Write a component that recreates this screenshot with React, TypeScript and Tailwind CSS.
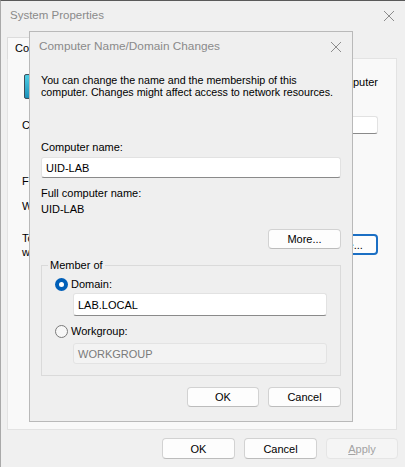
import React from "react";

const font = { fontFamily: '"Liberation Sans", Arial, sans-serif' };

function WinButton({ children, className = "", disabled = false, primary = false }: { children: React.ReactNode; className?: string; disabled?: boolean; primary?: boolean }) {
  return (
    <div
      className={`flex items-center justify-center rounded-[4px] border text-[11px] leading-[14px] ${
        disabled
          ? "bg-[#f5f5f5] border-[#e5e5e5] text-[#a3a3a3]"
          : primary
          ? "bg-[#fdfdfd] border-[#1b6fc4] text-black"
          : "bg-[#fdfdfd] border-[#d2d2d2] border-b-[#bcbcbc] text-black"
      } ${className}`}
    >
      {children}
    </div>
  );
}

function TextBox({ value, className = "", disabled = false }: { value: string; className?: string; disabled?: boolean }) {
  return (
    <div
      className={`flex items-center px-[4px] rounded-[3px] border text-[11px] ${
        disabled
          ? "bg-[#f3f3f3] border-[#e3e3e3] text-[#7a7a7a]"
          : "bg-white border-[#e2e2e2] border-b-[#8a8a8a] text-black"
      } ${className}`}
    >
      {value}
    </div>
  );
}

function Radio({ checked }: { checked: boolean }) {
  return checked ? (
    <span className="w-[13px] h-[13px] rounded-full bg-[#005fb8] flex items-center justify-center shrink-0">
      <span className="w-[5px] h-[5px] rounded-full bg-white" />
    </span>
  ) : (
    <span className="w-[13px] h-[13px] rounded-full border border-[#7a7a7a] bg-[#f7f7f7] shrink-0" />
  );
}

function CloseX() {
  return (
    <svg width="12" height="12" viewBox="0 0 12 12">
      <path d="M1 1 L11 11 M11 1 L1 11" stroke="#8c8c8c" strokeWidth="1" fill="none" />
    </svg>
  );
}

function ComputerIcon() {
  return (
    <svg width="30" height="28" viewBox="0 0 30 28">
      <defs>
        <linearGradient id="scr" x1="0" y1="0" x2="0" y2="1">
          <stop offset="0" stopColor="#4fd0e6" />
          <stop offset="1" stopColor="#1a8fb8" />
        </linearGradient>
      </defs>
      <rect x="0.5" y="0.5" width="29" height="24" rx="1.5" fill="url(#scr)" stroke="#3d4a55" />
      <rect x="10" y="24" width="10" height="3" fill="#6b7580" />
    </svg>
  );
}

export default function App() {
  return (
    <div className="relative w-[405px] h-[467px] overflow-hidden bg-[#f0f0f0] border-t border-l border-t-[#5a5a5a] border-l-[#a9a9a9] text-black" style={font}>
      {/* System Properties window (behind) */}
      <div className="h-[30px] flex items-center justify-between pl-[9px] pr-[10px]">
        <span className="text-[11.5px] text-[#8a8a8a]">System Properties</span>
        <CloseX />
      </div>
      <div className="h-[27px] flex items-end pl-[6px]">
        <div className="h-[22px] w-[120px] bg-[#f9f9f9] border border-b-0 border-[#dcdcdc] flex items-center pl-[7px] text-[11px] -mb-px relative">
          Computer Name
        </div>
      </div>
      <div className="ml-[6px] w-[390px] h-[372px] bg-[#f9f9f9] border border-[#e3e3e3] pl-[14px] pr-[18px] pt-[15px] text-[11px] leading-[14px]">
        <div className="flex items-start gap-[8px] ml-[2px]">
          <ComputerIcon />
          <div className="pt-[1px] whitespace-nowrap">
            Windows uses the following information to identify your computer
            <br />
            on the network.
          </div>
        </div>
        <div className="flex items-center justify-between mt-[13px]">
          <span>Computer description:</span>
          <TextBox value="" className="w-[240px] h-[18px]" />
        </div>
        <div className="ml-[114px] mt-[4px] w-[215px]">
          For example: "Kitchen Computer" or "Mary's Computer".
        </div>
        <div className="mt-[8px]">Full computer name:</div>
        <div className="mt-[11px]">Workgroup:</div>
        <div className="flex items-start justify-between mt-[18px]">
          <div className="w-[240px]">
            To rename this computer or change its domain or workgroup, click Change.
          </div>
          <WinButton primary className="w-[78px] h-[21px] border-[2px] mt-[3px]">Change...</WinButton>
        </div>
      </div>
      <div className="flex justify-end gap-[9px] pr-[7px] mt-[8px]">
        <WinButton className="w-[73px] h-[21px]">OK</WinButton>
        <WinButton className="w-[73px] h-[21px]">Cancel</WinButton>
        <WinButton disabled className="w-[72px] h-[21px]">
          <span><span className="underline">A</span>pply</span>
        </WinButton>
      </div>

      {/* Computer Name/Domain Changes dialog */}
      <div className="absolute z-20 left-[28px] top-[30px] w-[324px] h-[391px] bg-[#efefef] border border-[#b9b9b9] flex flex-col">
        <div className="h-[29px] flex items-center justify-between pl-[9px] pr-[10px]">
          <span className="text-[11.8px] text-[#8a8a8a]">Computer Name/Domain Changes</span>
          <CloseX />
        </div>
        <div className="flex flex-col px-[11px] text-[11px] leading-[14px]">
          <div className="text-[10.7px] leading-[12px] mt-[13px] whitespace-nowrap">
            You can change the name and the membership of this
            <br />
            computer. Changes might affect access to network resources.
          </div>
          <div className="mt-[42px]">Computer name:</div>
          <TextBox value="UID-LAB" className="h-[21px] mt-[3px]" />
          <div className="mt-[8px]">Full computer name:</div>
          <div className="mt-[2px]">UID-LAB</div>
          <div className="flex justify-end mt-[13px]">
            <WinButton className="w-[73px] h-[20px]">More...</WinButton>
          </div>
          <fieldset className="mt-[9px] border border-[#dadada] p-0">
            <legend className="ml-[6px] px-[2px]">Member of</legend>
            <div className="px-[13px] pb-[11px] pt-[5px]">
              <div className="flex items-center gap-[3px]">
                <Radio checked />
                <span>Domain:</span>
              </div>
              <TextBox value="LAB.LOCAL" className="h-[23px] mt-[2px] ml-[18px]" />
              <div className="flex items-center gap-[3px] mt-[8px]">
                <Radio checked={false} />
                <span>Workgroup:</span>
              </div>
              <TextBox value="WORKGROUP" disabled className="h-[21px] mt-[5px] ml-[18px]" />
            </div>
          </fieldset>
          <div className="flex justify-end gap-[9px] mt-[11px]">
            <WinButton className="w-[72px] h-[20px]">OK</WinButton>
            <WinButton className="w-[73px] h-[20px]">Cancel</WinButton>
          </div>
        </div>
      </div>
    </div>
  );
}
